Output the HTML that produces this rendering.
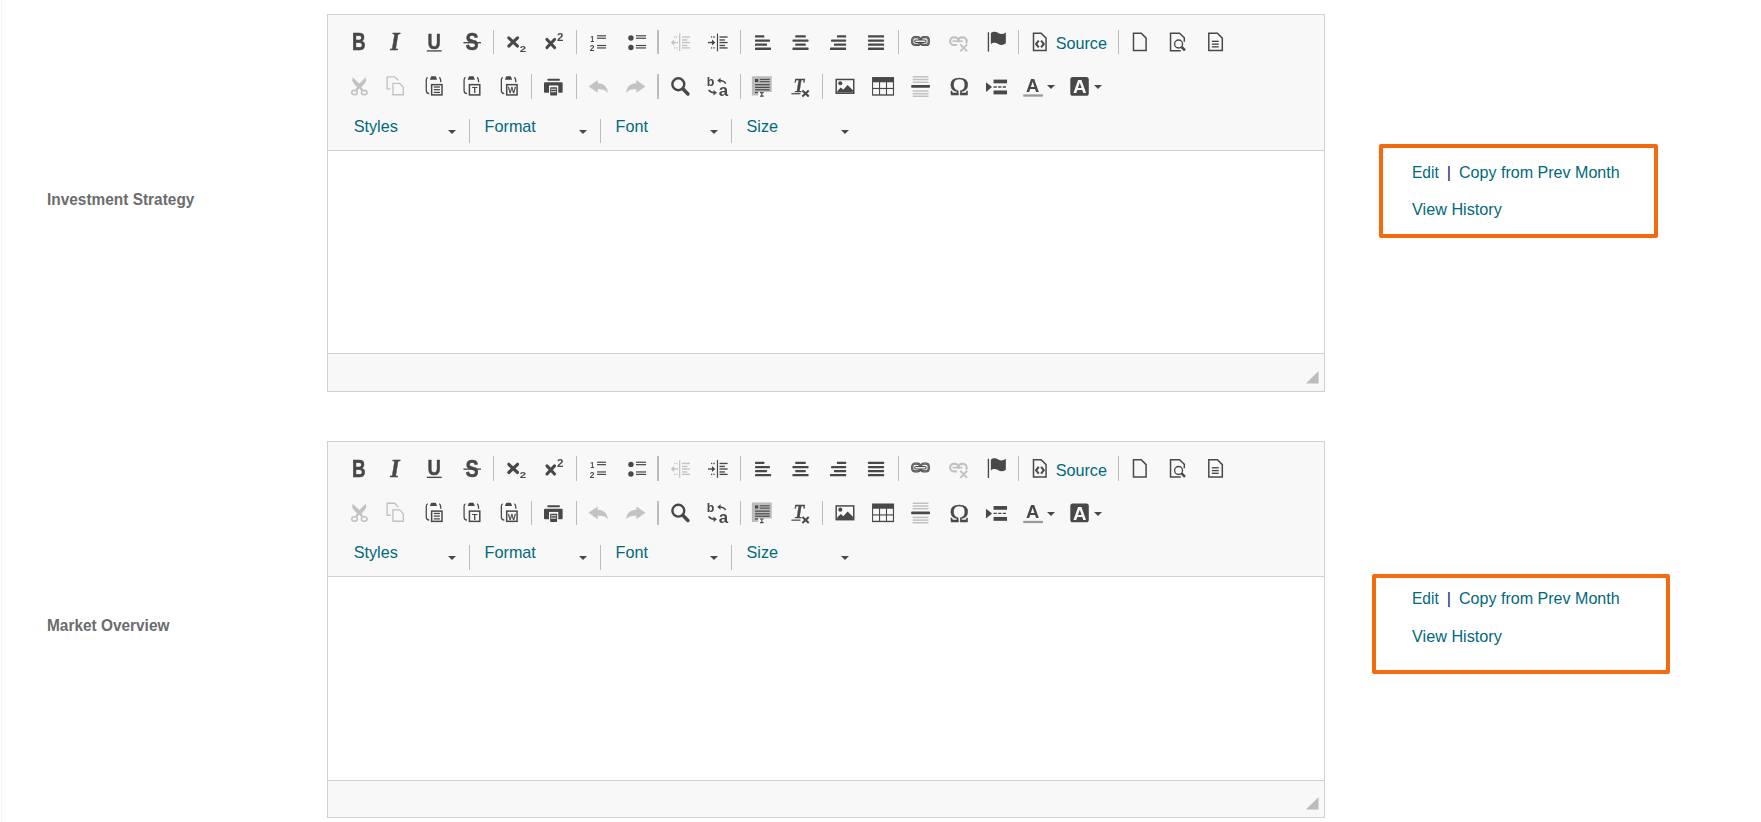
<!DOCTYPE html>
<html lang="en"><head><meta charset="utf-8"><title>Fund commentary editor</title>
<style>
html,body{margin:0;padding:0;background:#fff}
body{width:1761px;height:822px;position:relative;overflow:hidden;font-family:'Liberation Sans',sans-serif}
.abs{position:absolute;overflow:visible}
.ic{will-change:transform}
.vline{position:absolute;left:1px;top:0;width:1px;height:822px;background:#f5f5f5}
.ed{position:absolute;border:1px solid #d1d1d1;background:#fff}
.ed>div{position:absolute}
.tb{left:0;top:0;width:100%;background:#f8f8f8;border-bottom:1px solid #d1d1d1}
.ct{left:0;width:100%;background:#fff}
.bt{left:0;width:100%;background:#f8f8f8;border-top:1px solid #d1d1d1}
.sep{background:#bcbcbc}
.lbl,.cb{font-size:16.2px;line-height:24.3px;color:#00697a;white-space:nowrap}
.cb{line-height:20px}
.arr{width:0;height:0;border-left:4.05px solid transparent;border-right:4.05px solid transparent;border-top:4.05px solid #484848}
.tx{position:absolute;white-space:nowrap;transform-origin:0 0;line-height:20px}
.flab{font-weight:bold;font-size:15.8px;color:#6c6c6c}
.ob{position:absolute;border:4px solid #f46a0e;border-radius:2px}
.lk{font-size:16.4px;color:#00697a}
.bar{color:#14207a}
</style></head><body>
<div class="vline"></div>
<span class="tx flab" style="left:46.5px;top:190.3px;transform:scaleX(0.9760)">Investment Strategy</span>
<span class="tx flab" style="left:46.5px;top:616.3px;transform:scaleX(0.9750)">Market Overview</span>
<div class="ed" style="left:327px;top:14px;width:996px;height:376px">
<div class="tb" style="height:135px"></div>
<div class="ct" style="top:136px;height:202px"></div>
<div class="bt" style="top:338px;height:37px"></div>
<svg class="abs" style="left:978.1px;top:356.3px" width="12.6" height="12.4" viewBox="0 0 12.6 12.4"><path d="M12.6,0 V12.4 H0 Z" fill="#bcbcbc"/></svg>
<div class="sep" style="left:165px;top:15px;width:1px;height:24px"></div>
<div class="sep" style="left:248px;top:15px;width:1px;height:24px"></div>
<div class="sep" style="left:329px;top:15px;width:2px;height:24px"></div>
<div class="sep" style="left:412px;top:15px;width:1px;height:24px"></div>
<div class="sep" style="left:570px;top:15px;width:1px;height:24px"></div>
<div class="sep" style="left:690px;top:15px;width:1px;height:24px"></div>
<div class="sep" style="left:790px;top:15px;width:1px;height:24px"></div>
<div class="lbl" style="left:727.65px;top:15.75px">Source</div>
<div class="sep" style="left:203px;top:59px;width:1px;height:25px"></div>
<div class="sep" style="left:248px;top:59px;width:1px;height:25px"></div>
<div class="sep" style="left:329px;top:59px;width:2px;height:25px"></div>
<div class="sep" style="left:412px;top:59px;width:1px;height:25px"></div>
<div class="sep" style="left:494px;top:59px;width:1px;height:25px"></div>
<div class="arr" style="left:719.2px;top:70.2px"></div>
<div class="arr" style="left:766.45px;top:70.2px"></div>
<div class="cb" style="left:25.65px;top:100.6px">Styles</div>
<div class="arr" style="left:120.15px;top:115px"></div>
<div class="cb" style="left:156.6px;top:100.6px">Format</div>
<div class="arr" style="left:251.1px;top:115px"></div>
<div class="cb" style="left:287.55px;top:100.6px">Font</div>
<div class="arr" style="left:382.05px;top:115px"></div>
<div class="cb" style="left:418.5px;top:100.6px">Size</div>
<div class="arr" style="left:513px;top:115px"></div>
<div class="sep" style="left:141px;top:104px;width:1px;height:24px"></div>
<div class="sep" style="left:272px;top:104px;width:1px;height:24px"></div>
<div class="sep" style="left:403px;top:104px;width:1px;height:24px"></div>
<svg class="abs ic" style="left:0;top:0" width="996" height="120" viewBox="0 0 996 120"><g transform="translate(18.9 16.2) scale(1.35)"><text x="8.85" y="14.05" font-size="18.3" font-family="'Liberation Sans',sans-serif" font-weight="bold" font-style="normal" text-anchor="middle" fill="#484848" transform="translate(8.85 0) scale(0.765 1) translate(-8.85 0)" stroke="#484848" stroke-width="0.45" stroke-linejoin="round">B</text></g><g transform="translate(56.7 16.2) scale(1.35)"><text x="7.6" y="14.1" font-size="18.4" font-family="'Liberation Serif',serif" font-weight="bold" font-style="italic" text-anchor="middle" fill="#484848" transform="translate(7.6 0) scale(0.97 1) translate(-7.6 0)" stroke="#484848" stroke-width="0.3" stroke-linejoin="round">I</text></g><g transform="translate(94.5 16.2) scale(1.35)"><text x="8.6" y="12.85" font-size="16.3" font-family="'Liberation Sans',sans-serif" font-weight="bold" font-style="normal" text-anchor="middle" fill="#484848" transform="translate(8.6 0) scale(0.84 1) translate(-8.6 0)" stroke="#484848" stroke-width="0.35" stroke-linejoin="round">U</text><line x1="3.2" y1="14.6" x2="14.2" y2="14.6" stroke="#484848" stroke-width="1.0" stroke-linecap="butt"/></g><g transform="translate(132.3 16.2) scale(1.35)"><text x="8.7" y="14.0" font-size="18.3" font-family="'Liberation Sans',sans-serif" font-weight="bold" font-style="normal" text-anchor="middle" fill="#484848" transform="translate(8.7 0) scale(0.8 1) translate(-8.7 0)" stroke="#484848" stroke-width="0.4" stroke-linejoin="round">S</text><line x1="2.3" y1="8.5" x2="15.3" y2="8.5" stroke="#484848" stroke-width="1.0" stroke-linecap="butt"/></g><g transform="translate(176.85 16.2) scale(1.35)"><path d="M2.9,4.9 L9.4,11.0 M9.4,4.9 L2.9,11.0" stroke="#484848" stroke-width="2.3" stroke-linecap="round" fill="none"/><text x="13.45" y="15.1" font-size="7.4" font-family="'Liberation Sans',sans-serif" font-weight="bold" font-style="normal" text-anchor="middle" fill="#484848" transform="translate(13.45 0) scale(1.15 1) translate(-13.45 0)">2</text></g><g transform="translate(214.65 16.2) scale(1.35)"><path d="M3.2,6.1 L8.8,12.1 M8.8,6.1 L3.2,12.1" stroke="#484848" stroke-width="2.3" stroke-linecap="round" fill="none"/><text x="13.05" y="6.95" font-size="7.9" font-family="'Liberation Sans',sans-serif" font-weight="bold" font-style="normal" text-anchor="middle" fill="#484848" transform="translate(13.05 0) scale(1.08 1) translate(-13.05 0)">2</text></g><g transform="translate(259.2 16.2) scale(1.35)"><text x="3.8" y="7.7" font-size="6.6" font-family="'Liberation Sans',sans-serif" font-weight="bold" font-style="normal" text-anchor="middle" fill="#484848" transform="translate(3.8 0) scale(0.8 1) translate(-3.8 0)">1</text><text x="3.6" y="14.8" font-size="6.6" font-family="'Liberation Sans',sans-serif" font-weight="bold" font-style="normal" text-anchor="middle" fill="#484848" transform="translate(3.6 0) scale(0.95 1) translate(-3.6 0)">2</text><line x1="7.3" y1="3.4" x2="13.9" y2="3.4" stroke="#484848" stroke-width="0.9" stroke-linecap="butt"/><line x1="7.3" y1="5.2" x2="13.9" y2="5.2" stroke="#484848" stroke-width="0.9" stroke-linecap="butt"/><line x1="7.3" y1="10.6" x2="13.9" y2="10.6" stroke="#484848" stroke-width="0.9" stroke-linecap="butt"/><line x1="7.3" y1="12.4" x2="13.9" y2="12.4" stroke="#484848" stroke-width="0.9" stroke-linecap="butt"/></g><g transform="translate(297 16.2) scale(1.35)"><circle cx="4.4" cy="5.0" r="2.0" fill="#484848"/><circle cx="4.4" cy="12.1" r="2.0" fill="#484848"/><line x1="8.1" y1="3.4" x2="15.6" y2="3.4" stroke="#484848" stroke-width="0.9" stroke-linecap="butt"/><line x1="8.1" y1="5.2" x2="15.6" y2="5.2" stroke="#484848" stroke-width="0.9" stroke-linecap="butt"/><line x1="8.1" y1="10.6" x2="15.6" y2="10.6" stroke="#484848" stroke-width="0.9" stroke-linecap="butt"/><line x1="8.1" y1="12.4" x2="15.6" y2="12.4" stroke="#484848" stroke-width="0.9" stroke-linecap="butt"/></g><g transform="translate(341.55 16.2) scale(1.35)" style="opacity:.3"><line x1="7.5" y1="1.7" x2="7.5" y2="14.9" stroke="#484848" stroke-width="0.9"/><line x1="9.2" y1="4.3" x2="15.2" y2="4.3" stroke="#484848" stroke-width="1.0" stroke-linecap="butt"/><line x1="9.2" y1="6.5" x2="13.2" y2="6.5" stroke="#484848" stroke-width="1.0" stroke-linecap="butt"/><line x1="9.2" y1="8.4" x2="15.2" y2="8.4" stroke="#484848" stroke-width="1.0" stroke-linecap="butt"/><line x1="9.2" y1="10.6" x2="13.2" y2="10.6" stroke="#484848" stroke-width="1.0" stroke-linecap="butt"/><line x1="9.2" y1="12.4" x2="15.2" y2="12.4" stroke="#484848" stroke-width="1.0" stroke-linecap="butt"/><line x1="2.2" y1="8.4" x2="6.3" y2="8.4" stroke="#484848" stroke-width="1.0" stroke-linecap="butt"/><path d="M0.9,8.4 L3.4,6.2 V10.6 Z" fill="#484848"/><line x1="3.3" y1="4.3" x2="4.2" y2="4.3" stroke="#484848" stroke-width="1.0" stroke-linecap="butt"/><line x1="4.9" y1="4.3" x2="5.8" y2="4.3" stroke="#484848" stroke-width="1.0" stroke-linecap="butt"/><line x1="3.3" y1="12.4" x2="4.2" y2="12.4" stroke="#484848" stroke-width="1.0" stroke-linecap="butt"/><line x1="4.9" y1="12.4" x2="5.8" y2="12.4" stroke="#484848" stroke-width="1.0" stroke-linecap="butt"/></g><g transform="translate(379.35 16.2) scale(1.35)"><line x1="7.5" y1="1.7" x2="7.5" y2="14.9" stroke="#484848" stroke-width="0.9"/><line x1="9.0" y1="4.3" x2="15.0" y2="4.3" stroke="#484848" stroke-width="1.0" stroke-linecap="butt"/><line x1="9.0" y1="6.5" x2="13.0" y2="6.5" stroke="#484848" stroke-width="1.0" stroke-linecap="butt"/><line x1="9.0" y1="8.4" x2="15.0" y2="8.4" stroke="#484848" stroke-width="1.0" stroke-linecap="butt"/><line x1="9.0" y1="10.6" x2="13.0" y2="10.6" stroke="#484848" stroke-width="1.0" stroke-linecap="butt"/><line x1="9.0" y1="12.4" x2="15.0" y2="12.4" stroke="#484848" stroke-width="1.0" stroke-linecap="butt"/><line x1="0.5" y1="8.4" x2="4.4" y2="8.4" stroke="#484848" stroke-width="1.0" stroke-linecap="butt"/><path d="M5.9,8.4 L3.4,6.2 V10.6 Z" fill="#484848"/><line x1="2.7" y1="4.3" x2="3.6" y2="4.3" stroke="#484848" stroke-width="1.0" stroke-linecap="butt"/><line x1="4.4" y1="4.3" x2="5.4" y2="4.3" stroke="#484848" stroke-width="1.0" stroke-linecap="butt"/><line x1="2.7" y1="12.4" x2="3.6" y2="12.4" stroke="#484848" stroke-width="1.0" stroke-linecap="butt"/><line x1="4.4" y1="12.4" x2="5.4" y2="12.4" stroke="#484848" stroke-width="1.0" stroke-linecap="butt"/></g><g transform="translate(423.9 16.2) scale(1.35)"><rect x="2.3" y="3.05" width="6.8999999999999995" height="1.7" rx="0.35" fill="#484848"/><rect x="2.3" y="6.15" width="11.100000000000001" height="1.7" rx="0.35" fill="#484848"/><rect x="2.3" y="9.15" width="8.899999999999999" height="1.7" rx="0.35" fill="#484848"/><rect x="2.3" y="12.15" width="11.899999999999999" height="1.7" rx="0.35" fill="#484848"/></g><g transform="translate(461.7 16.2) scale(1.35)"><rect x="4.1" y="3.05" width="7.800000000000001" height="1.7" rx="0.35" fill="#484848"/><rect x="2.05" y="6.15" width="11.899999999999999" height="1.7" rx="0.35" fill="#484848"/><rect x="4.1" y="9.15" width="7.800000000000001" height="1.7" rx="0.35" fill="#484848"/><rect x="2.05" y="12.15" width="11.899999999999999" height="1.7" rx="0.35" fill="#484848"/></g><g transform="translate(499.5 16.2) scale(1.35)"><rect x="7.0" y="3.05" width="6.800000000000001" height="1.7" rx="0.35" fill="#484848"/><rect x="2.6" y="6.15" width="11.200000000000001" height="1.7" rx="0.35" fill="#484848"/><rect x="4.8" y="9.15" width="9.0" height="1.7" rx="0.35" fill="#484848"/><rect x="1.85" y="12.15" width="11.950000000000001" height="1.7" rx="0.35" fill="#484848"/></g><g transform="translate(537.3 16.2) scale(1.35)"><rect x="2.0" y="3.05" width="11.9" height="1.7" rx="0.35" fill="#484848"/><rect x="2.0" y="6.15" width="11.9" height="1.7" rx="0.35" fill="#484848"/><rect x="2.0" y="9.15" width="11.9" height="1.7" rx="0.35" fill="#484848"/><rect x="2.0" y="12.15" width="11.9" height="1.7" rx="0.35" fill="#484848"/></g><g transform="translate(581.85 16.2) scale(1.35)"><rect x="1.75" y="4.4" width="5.8" height="5.8" rx="2.1" fill="none" stroke="#484848" stroke-width="1.65"/><rect x="1.75" y="4.4" width="5.8" height="5.8" rx="2.1" fill="none" stroke="#8e8e8e" stroke-width="0.5"/><rect x="8.2" y="4.4" width="5.800000000000001" height="5.8" rx="2.1" fill="none" stroke="#484848" stroke-width="1.65"/><rect x="8.2" y="4.4" width="5.800000000000001" height="5.8" rx="2.1" fill="none" stroke="#8e8e8e" stroke-width="0.5"/><rect x="3.55" y="6.5" width="8.5" height="1.9" rx="0.95" fill="#ececec" stroke="#484848" stroke-width="0.75"/></g><g transform="translate(619.65 16.2) scale(1.35)" style="opacity:.3"><path d="M8.2,8.2 V7.3 A2.7,2.7 0 0 0 5.5,4.6 H4.5 A2.7,2.7 0 0 0 1.8,7.3 V7.5 A2.7,2.7 0 0 0 4.5,10.2 H7" fill="none" stroke="#484848" stroke-width="1.6"/><path d="M7.8,7.6 V7.3 A2.7,2.7 0 0 1 10.5,4.6 H11.4 A2.7,2.7 0 0 1 14.1,7.3 V7.6 A2.4,2.4 0 0 1 13.6,8.9" fill="none" stroke="#484848" stroke-width="1.6"/><path d="M3.6,7.4 H11" stroke="#484848" stroke-width="1.3" fill="none"/><path d="M9.3,9.7 L14.4,15 M14.4,9.7 L9.3,15" stroke="#484848" stroke-width="1.4" fill="none"/></g><g transform="translate(657.45 16.2) scale(1.35)"><line x1="2.2" y1="0.8" x2="2.2" y2="15.1" stroke="#484848" stroke-width="1.0"/><path d="M4,1.5 C5.6,0 7.6,0.1 9.5,1.3 C11.2,2.4 13.2,2.3 15.1,0.9 V9 C13.2,10.4 11.2,10.5 9.5,9.4 C7.6,8.2 5.6,8.1 4,9.6 Z" fill="#484848"/></g><g transform="translate(702 16.2) scale(1.35)"><path d="M2.6,1.55 H8.3 L11.9,5.15 V14.35 H2.6 Z" fill="none" stroke="#484848" stroke-width="1.1" stroke-linejoin="miter"/><path d="M6.5,6.9 L4.5,9.4 L6.5,11.9 M8.2,6.9 L10.2,9.4 L8.2,11.9" fill="none" stroke="#484848" stroke-width="1.5"/></g><g transform="translate(801.9 16.2) scale(1.35)"><path d="M2.65,1.55 H8.4 L12.0,5.15 V14.35 H2.65 Z" fill="none" stroke="#484848" stroke-width="1.1" stroke-linejoin="miter"/></g><g transform="translate(839.7 16.2) scale(1.35)"><path d="M12.3,7.8 V4.9 L8.8,1.5 H2.1 V14.4 H9.7" fill="none" stroke="#484848" stroke-width="1.1"/><circle cx="8.05" cy="9.5" r="2.95" fill="none" stroke="#484848" stroke-width="1.0"/><path d="M10.3,11.7 L12.8,14.2" stroke="#484848" stroke-width="1.9"/></g><g transform="translate(877.5 16.2) scale(1.35)"><path d="M2.45,1.55 H8.85 L12.45,5.15 V14.35 H2.45 Z" fill="none" stroke="#484848" stroke-width="1.1" stroke-linejoin="miter"/><line x1="4.7" y1="7.5" x2="9.8" y2="7.5" stroke="#484848" stroke-width="1.0" stroke-linecap="butt"/><line x1="4.7" y1="9.6" x2="9.8" y2="9.6" stroke="#484848" stroke-width="1.0" stroke-linecap="butt"/><line x1="4.7" y1="11.6" x2="9.8" y2="11.6" stroke="#484848" stroke-width="1.0" stroke-linecap="butt"/></g><g transform="translate(18.9 60.75) scale(1.35)" style="opacity:.3"><path d="M4.3,1.2 L3.9,3.7 L5.3,5.9 L8.1,9.1 L10.6,7.0 L7.5,4.3 Z" fill="#484848"/><path d="M14.0,1.2 L14.4,3.7 L13.0,5.9 L10.2,9.1 L7.7,7.0 L10.8,4.3 Z" fill="#484848"/><path d="M7.9,6.3 H10.4 V9.2 H7.9 Z" fill="#484848"/><path d="M8.6,8.6 L6.9,10.7 M9.7,8.6 L11.4,10.7" stroke="#484848" stroke-width="1.7" fill="none"/><ellipse cx="5.65" cy="12.45" rx="2.1" ry="1.6" fill="none" stroke="#484848" stroke-width="1.15"/><ellipse cx="12.85" cy="12.45" rx="2.1" ry="1.6" fill="none" stroke="#484848" stroke-width="1.15"/></g><g transform="translate(56.7 60.75) scale(1.35)" style="opacity:.3"><path d="M4.4,9.7 H1.8 V0.8 H7.4 L10.0,3.4" fill="none" stroke="#484848" stroke-width="1.0"/><path d="M6.1,5.7 H11.0 L13.8,8.5 V14.1 H6.1 Z" fill="none" stroke="#484848" stroke-width="1.0"/></g><g transform="translate(94.5 60.75) scale(1.35)"><path d="M3.85,1.15 C3.0,1.5 2.8,2.2 2.8,3.2 V11.0 C2.8,12.6 3.4000000000000004,13.2 5.0,13.2" fill="none" stroke="#484848" stroke-width="0.95"/><path d="M12.4,1.15 C13.299999999999999,1.6 13.549999999999999,2.4 13.549999999999999,4.8" fill="none" stroke="#484848" stroke-width="0.95"/><path d="M5.45,2.9 L6.35,0.6 Q6.5,0.35 6.800000000000001,0.35 H9.45 Q9.75,0.35 9.9,0.6 L10.799999999999999,2.9 Z" fill="#484848"/><rect x="6.77" y="6.6" width="7.68" height="7.6" fill="#f8f8f8" stroke="#484848" stroke-width="1.1"/><line x1="8.35" y1="8.35" x2="12.9" y2="8.35" stroke="#484848" stroke-width="0.95" stroke-linecap="butt"/><line x1="8.35" y1="10.3" x2="12.9" y2="10.3" stroke="#484848" stroke-width="0.95" stroke-linecap="butt"/><line x1="8.35" y1="12.35" x2="12.9" y2="12.35" stroke="#484848" stroke-width="0.95" stroke-linecap="butt"/></g><g transform="translate(132.3 60.75) scale(1.35)"><path d="M3.85,1.15 C3.0,1.5 2.8,2.2 2.8,3.2 V11.0 C2.8,12.6 3.4000000000000004,13.2 5.0,13.2" fill="none" stroke="#484848" stroke-width="0.95"/><path d="M12.4,1.15 C13.299999999999999,1.6 13.549999999999999,2.4 13.549999999999999,4.8" fill="none" stroke="#484848" stroke-width="0.95"/><path d="M5.45,2.9 L6.35,0.6 Q6.5,0.35 6.800000000000001,0.35 H9.45 Q9.75,0.35 9.9,0.6 L10.799999999999999,2.9 Z" fill="#484848"/><rect x="6.77" y="6.6" width="7.68" height="7.6" fill="#f8f8f8" stroke="#484848" stroke-width="1.1"/><text x="10.6" y="13.0" font-size="6.6" font-family="'Liberation Sans',sans-serif" font-weight="bold" font-style="normal" text-anchor="middle" fill="#484848" >T</text></g><g transform="translate(170.1 60.75) scale(1.35)"><path d="M3.45,1.15 C2.6,1.5 2.4,2.2 2.4,3.2 V11.0 C2.4,12.6 3.0,13.2 4.6,13.2" fill="none" stroke="#484848" stroke-width="0.95"/><path d="M12.0,1.15 C12.899999999999999,1.6 13.149999999999999,2.4 13.149999999999999,4.8" fill="none" stroke="#484848" stroke-width="0.95"/><path d="M5.05,2.9 L5.95,0.6 Q6.1000000000000005,0.35 6.4,0.35 H9.049999999999999 Q9.35,0.35 9.5,0.6 L10.399999999999999,2.9 Z" fill="#484848"/><rect x="6.37" y="6.6" width="7.68" height="7.6" fill="#f8f8f8" stroke="#484848" stroke-width="1.1"/><text x="10.2" y="13.0" font-size="6.6" font-family="'Liberation Sans',sans-serif" font-weight="normal" font-style="normal" text-anchor="middle" fill="#484848" transform="translate(10.2 0) scale(0.92 1) translate(-10.2 0)" stroke="#484848" stroke-width="0.3" stroke-linejoin="round">W</text></g><g transform="translate(214.65 60.75) scale(1.35)"><rect x="3.4" y="2.2" width="9.4" height="1.5" rx="0.7" fill="#484848"/><rect x="1.0" y="4.8" width="13.8" height="7.8" rx="0.8" fill="#484848"/><rect x="4.7" y="7.2" width="6.9" height="7.6" fill="#f8f8f8"/><rect x="5.6" y="8.5" width="5.1" height="6.1" rx="0.5" fill="#484848"/><line x1="6.2" y1="10.0" x2="10.1" y2="10.0" stroke="#e0e0e0" stroke-width="0.8" stroke-linecap="butt"/><line x1="6.2" y1="11.8" x2="10.1" y2="11.8" stroke="#e0e0e0" stroke-width="0.8" stroke-linecap="butt"/></g><g transform="translate(259.2 60.75) scale(1.35)" style="opacity:.3"><path d="M1.0,7.9 L7.8,3.1 V5.6 C12.3,5.6 15.0,8.4 15.3,12.7 C13.6,10.6 11.4,9.9 7.8,10.1 V12.6 Z" fill="#484848"/></g><g transform="translate(297 60.75) scale(1.35)" style="opacity:.3"><path d="M15.2,7.9 L8.4,3.1 V5.6 C3.9,5.6 1.2,8.4 0.9,12.7 C2.6,10.6 4.8,9.9 8.4,10.1 V12.6 Z" fill="#484848"/></g><g transform="translate(341.55 60.75) scale(1.35)"><circle cx="6.5" cy="6.3" r="4.4" fill="none" stroke="#484848" stroke-width="1.8"/><path d="M10.0,9.9 L13.6,13.5" stroke="#484848" stroke-width="2.6" stroke-linecap="round"/></g><g transform="translate(379.35 60.75) scale(1.35)"><text x="2.3" y="7.55" font-size="9.2" font-family="'Liberation Sans',sans-serif" font-weight="bold" font-style="normal" text-anchor="middle" fill="#484848" >b</text><text x="11.9" y="15.2" font-size="12.5" font-family="'Liberation Sans',sans-serif" font-weight="bold" font-style="normal" text-anchor="middle" fill="#484848" >a</text><path d="M13.6,5.8 C12.6,4.0 11.0,3.4 8.8,3.5" fill="none" stroke="#484848" stroke-width="1.1"/><path d="M7.3,3.5 L9.8,1.5 V5.5 Z" fill="#484848"/><path d="M1.0,10.5 C1.9,12.0 3.4,12.6 5.4,12.6" fill="none" stroke="#484848" stroke-width="1.1"/><path d="M7.1,12.6 L4.6,10.6 V14.6 Z" fill="#484848"/></g><g transform="translate(423.9 60.75) scale(1.35)"><path d="M0,0.3 H14.7 V12.0 H4.7 V14.6 H0 Z" fill="#bcbcbc"/><rect x="2.3" y="2.4" width="2.4" height="2.3" fill="#484848"/><line x1="5.8" y1="2.7" x2="13.2" y2="2.7" stroke="#484848" stroke-width="0.8" stroke-linecap="butt"/><line x1="5.8" y1="4.4" x2="13.2" y2="4.4" stroke="#484848" stroke-width="0.8" stroke-linecap="butt"/><line x1="2.3" y1="6.6" x2="13.2" y2="6.6" stroke="#484848" stroke-width="0.9" stroke-linecap="butt"/><line x1="2.3" y1="8.6" x2="13.2" y2="8.6" stroke="#484848" stroke-width="0.9" stroke-linecap="butt"/><line x1="2.3" y1="10.4" x2="13.2" y2="10.4" stroke="#484848" stroke-width="0.9" stroke-linecap="butt"/><line x1="2.3" y1="12.4" x2="4.5" y2="12.4" stroke="#484848" stroke-width="0.9" stroke-linecap="butt"/><path d="M6.0,12.5 H8.7 M6.0,15.1 H8.7 M7.35,12.5 V15.1" stroke="#484848" stroke-width="0.8" fill="none"/></g><g transform="translate(461.7 60.75) scale(1.35)"><text x="6.9" y="12.0" font-size="14.4" font-family="'Liberation Serif',serif" font-weight="bold" font-style="italic" text-anchor="middle" fill="#484848" transform="translate(6.9 0) scale(0.92 1) translate(-6.9 0)" stroke="#484848" stroke-width="0.25" stroke-linejoin="round">T</text><line x1="1.25" y1="13.3" x2="8.0" y2="13.3" stroke="#484848" stroke-width="0.9" stroke-linecap="butt"/><path d="M9.4,11.0 L14.1,15.4 M14.1,11.0 L9.4,15.4" stroke="#484848" stroke-width="1.5" fill="none"/></g><g transform="translate(506.25 60.75) scale(1.35)"><rect x="1.45" y="2.75" width="13.0" height="10.2" fill="none" stroke="#484848" stroke-width="1.1"/><circle cx="4.5" cy="5.5" r="1.5" fill="#484848"/><path d="M2.2,12.4 V11.4 L4.9,8.7 L6.7,10.4 L9.9,6.8 L13.8,10.8 V12.4 Z" fill="#484848"/></g><g transform="translate(544.05 60.75) scale(1.35)"><rect x="0" y="0.96" width="16.3" height="13.8" fill="#484848"/><rect x="0.8" y="4.85" width="4.35" height="4.15" fill="#f8f8f8"/><rect x="0.8" y="9.85" width="4.35" height="3.9" fill="#f8f8f8"/><rect x="5.95" y="4.85" width="4.35" height="4.15" fill="#f8f8f8"/><rect x="5.95" y="9.85" width="4.35" height="3.9" fill="#f8f8f8"/><rect x="11.1" y="4.85" width="4.35" height="4.15" fill="#f8f8f8"/><rect x="11.1" y="9.85" width="4.35" height="3.9" fill="#f8f8f8"/></g><g transform="translate(581.85 60.75) scale(1.35)"><line x1="2.1" y1="0.8" x2="13.8" y2="0.8" stroke="#c0c0c0" stroke-width="1.1" stroke-linecap="butt"/><line x1="2.1" y1="2.8" x2="13.8" y2="2.8" stroke="#c0c0c0" stroke-width="1.1" stroke-linecap="butt"/><line x1="2.1" y1="4.8" x2="13.8" y2="4.8" stroke="#c0c0c0" stroke-width="1.1" stroke-linecap="butt"/><rect x="1.0" y="6.9" width="13.9" height="2.0" rx="0.5" fill="#484848"/><line x1="2.1" y1="11.3" x2="13.8" y2="11.3" stroke="#c0c0c0" stroke-width="1.1" stroke-linecap="butt"/><line x1="2.1" y1="13.3" x2="13.8" y2="13.3" stroke="#c0c0c0" stroke-width="1.1" stroke-linecap="butt"/><line x1="2.1" y1="15.2" x2="13.8" y2="15.2" stroke="#c0c0c0" stroke-width="1.1" stroke-linecap="butt"/></g><g transform="translate(619.65 60.75) scale(1.35)"><text x="8.6" y="14.6" font-size="18.7" font-family="'Liberation Serif',serif" font-weight="normal" font-style="normal" text-anchor="middle" fill="#484848" transform="translate(8.6 0) scale(1.04 1) translate(-8.6 0)" stroke="#484848" stroke-width="0.35" stroke-linejoin="round">Ω</text></g><g transform="translate(657.45 60.75) scale(1.35)"><path d="M0.4,4.9 L4.9,8.4 L0.4,12 Z" fill="#484848"/><rect x="6.0" y="2.85" width="10" height="2.75" fill="#484848"/><rect x="6.0" y="10.9" width="10" height="2.9" fill="#484848"/><path d="M6.0,8.3 H16" stroke="#484848" stroke-width="1.0" stroke-dasharray="2.4 1.0" fill="none"/></g><g transform="translate(695.25 60.75) scale(1.35)"><text x="7.0" y="12.0" font-size="13.6" font-family="'Liberation Sans',sans-serif" font-weight="bold" font-style="normal" text-anchor="middle" fill="#484848" >A</text><rect x="0" y="13.8" width="14.6" height="1.7" fill="#9a9a9a"/></g><g transform="translate(742.5 60.75) scale(1.35)"><rect x="-0.15" y="0.9" width="13.7" height="13.95" rx="1.9" fill="#484848"/><text x="6.85" y="12.85" font-size="13.9" font-family="'Liberation Sans',sans-serif" font-weight="bold" font-style="normal" text-anchor="middle" fill="#f8f8f8" >A</text></g></svg>
</div>
<div class="ed" style="left:327px;top:441px;width:996px;height:375px">
<div class="tb" style="height:134px"></div>
<div class="ct" style="top:135px;height:203px"></div>
<div class="bt" style="top:338px;height:36px"></div>
<svg class="abs" style="left:978.1px;top:355.3px" width="12.6" height="12.4" viewBox="0 0 12.6 12.4"><path d="M12.6,0 V12.4 H0 Z" fill="#bcbcbc"/></svg>
<div class="sep" style="left:165px;top:14px;width:1px;height:25px"></div>
<div class="sep" style="left:248px;top:14px;width:1px;height:25px"></div>
<div class="sep" style="left:329px;top:14px;width:2px;height:25px"></div>
<div class="sep" style="left:412px;top:14px;width:1px;height:25px"></div>
<div class="sep" style="left:570px;top:14px;width:1px;height:25px"></div>
<div class="sep" style="left:690px;top:14px;width:1px;height:25px"></div>
<div class="sep" style="left:790px;top:14px;width:1px;height:25px"></div>
<div class="lbl" style="left:727.65px;top:15.75px">Source</div>
<div class="sep" style="left:203px;top:59px;width:1px;height:24px"></div>
<div class="sep" style="left:248px;top:59px;width:1px;height:24px"></div>
<div class="sep" style="left:329px;top:59px;width:2px;height:24px"></div>
<div class="sep" style="left:412px;top:59px;width:1px;height:24px"></div>
<div class="sep" style="left:494px;top:59px;width:1px;height:24px"></div>
<div class="arr" style="left:719.2px;top:69.65px"></div>
<div class="arr" style="left:766.45px;top:69.65px"></div>
<div class="cb" style="left:25.65px;top:99.6px">Styles</div>
<div class="arr" style="left:120.15px;top:114px"></div>
<div class="cb" style="left:156.6px;top:99.6px">Format</div>
<div class="arr" style="left:251.1px;top:114px"></div>
<div class="cb" style="left:287.55px;top:99.6px">Font</div>
<div class="arr" style="left:382.05px;top:114px"></div>
<div class="cb" style="left:418.5px;top:99.6px">Size</div>
<div class="arr" style="left:513px;top:114px"></div>
<div class="sep" style="left:141px;top:103px;width:1px;height:25px"></div>
<div class="sep" style="left:272px;top:103px;width:1px;height:25px"></div>
<div class="sep" style="left:403px;top:103px;width:1px;height:25px"></div>
<svg class="abs ic" style="left:0;top:0" width="996" height="120" viewBox="0 0 996 120"><g transform="translate(18.9 15.65) scale(1.35)"><text x="8.85" y="14.05" font-size="18.3" font-family="'Liberation Sans',sans-serif" font-weight="bold" font-style="normal" text-anchor="middle" fill="#484848" transform="translate(8.85 0) scale(0.765 1) translate(-8.85 0)" stroke="#484848" stroke-width="0.45" stroke-linejoin="round">B</text></g><g transform="translate(56.7 15.65) scale(1.35)"><text x="7.6" y="14.1" font-size="18.4" font-family="'Liberation Serif',serif" font-weight="bold" font-style="italic" text-anchor="middle" fill="#484848" transform="translate(7.6 0) scale(0.97 1) translate(-7.6 0)" stroke="#484848" stroke-width="0.3" stroke-linejoin="round">I</text></g><g transform="translate(94.5 15.65) scale(1.35)"><text x="8.6" y="12.85" font-size="16.3" font-family="'Liberation Sans',sans-serif" font-weight="bold" font-style="normal" text-anchor="middle" fill="#484848" transform="translate(8.6 0) scale(0.84 1) translate(-8.6 0)" stroke="#484848" stroke-width="0.35" stroke-linejoin="round">U</text><line x1="3.2" y1="14.6" x2="14.2" y2="14.6" stroke="#484848" stroke-width="1.0" stroke-linecap="butt"/></g><g transform="translate(132.3 15.65) scale(1.35)"><text x="8.7" y="14.0" font-size="18.3" font-family="'Liberation Sans',sans-serif" font-weight="bold" font-style="normal" text-anchor="middle" fill="#484848" transform="translate(8.7 0) scale(0.8 1) translate(-8.7 0)" stroke="#484848" stroke-width="0.4" stroke-linejoin="round">S</text><line x1="2.3" y1="8.5" x2="15.3" y2="8.5" stroke="#484848" stroke-width="1.0" stroke-linecap="butt"/></g><g transform="translate(176.85 15.65) scale(1.35)"><path d="M2.9,4.9 L9.4,11.0 M9.4,4.9 L2.9,11.0" stroke="#484848" stroke-width="2.3" stroke-linecap="round" fill="none"/><text x="13.45" y="15.1" font-size="7.4" font-family="'Liberation Sans',sans-serif" font-weight="bold" font-style="normal" text-anchor="middle" fill="#484848" transform="translate(13.45 0) scale(1.15 1) translate(-13.45 0)">2</text></g><g transform="translate(214.65 15.65) scale(1.35)"><path d="M3.2,6.1 L8.8,12.1 M8.8,6.1 L3.2,12.1" stroke="#484848" stroke-width="2.3" stroke-linecap="round" fill="none"/><text x="13.05" y="6.95" font-size="7.9" font-family="'Liberation Sans',sans-serif" font-weight="bold" font-style="normal" text-anchor="middle" fill="#484848" transform="translate(13.05 0) scale(1.08 1) translate(-13.05 0)">2</text></g><g transform="translate(259.2 15.65) scale(1.35)"><text x="3.8" y="7.7" font-size="6.6" font-family="'Liberation Sans',sans-serif" font-weight="bold" font-style="normal" text-anchor="middle" fill="#484848" transform="translate(3.8 0) scale(0.8 1) translate(-3.8 0)">1</text><text x="3.6" y="14.8" font-size="6.6" font-family="'Liberation Sans',sans-serif" font-weight="bold" font-style="normal" text-anchor="middle" fill="#484848" transform="translate(3.6 0) scale(0.95 1) translate(-3.6 0)">2</text><line x1="7.3" y1="3.4" x2="13.9" y2="3.4" stroke="#484848" stroke-width="0.9" stroke-linecap="butt"/><line x1="7.3" y1="5.2" x2="13.9" y2="5.2" stroke="#484848" stroke-width="0.9" stroke-linecap="butt"/><line x1="7.3" y1="10.6" x2="13.9" y2="10.6" stroke="#484848" stroke-width="0.9" stroke-linecap="butt"/><line x1="7.3" y1="12.4" x2="13.9" y2="12.4" stroke="#484848" stroke-width="0.9" stroke-linecap="butt"/></g><g transform="translate(297 15.65) scale(1.35)"><circle cx="4.4" cy="5.0" r="2.0" fill="#484848"/><circle cx="4.4" cy="12.1" r="2.0" fill="#484848"/><line x1="8.1" y1="3.4" x2="15.6" y2="3.4" stroke="#484848" stroke-width="0.9" stroke-linecap="butt"/><line x1="8.1" y1="5.2" x2="15.6" y2="5.2" stroke="#484848" stroke-width="0.9" stroke-linecap="butt"/><line x1="8.1" y1="10.6" x2="15.6" y2="10.6" stroke="#484848" stroke-width="0.9" stroke-linecap="butt"/><line x1="8.1" y1="12.4" x2="15.6" y2="12.4" stroke="#484848" stroke-width="0.9" stroke-linecap="butt"/></g><g transform="translate(341.55 15.65) scale(1.35)" style="opacity:.3"><line x1="7.5" y1="1.7" x2="7.5" y2="14.9" stroke="#484848" stroke-width="0.9"/><line x1="9.2" y1="4.3" x2="15.2" y2="4.3" stroke="#484848" stroke-width="1.0" stroke-linecap="butt"/><line x1="9.2" y1="6.5" x2="13.2" y2="6.5" stroke="#484848" stroke-width="1.0" stroke-linecap="butt"/><line x1="9.2" y1="8.4" x2="15.2" y2="8.4" stroke="#484848" stroke-width="1.0" stroke-linecap="butt"/><line x1="9.2" y1="10.6" x2="13.2" y2="10.6" stroke="#484848" stroke-width="1.0" stroke-linecap="butt"/><line x1="9.2" y1="12.4" x2="15.2" y2="12.4" stroke="#484848" stroke-width="1.0" stroke-linecap="butt"/><line x1="2.2" y1="8.4" x2="6.3" y2="8.4" stroke="#484848" stroke-width="1.0" stroke-linecap="butt"/><path d="M0.9,8.4 L3.4,6.2 V10.6 Z" fill="#484848"/><line x1="3.3" y1="4.3" x2="4.2" y2="4.3" stroke="#484848" stroke-width="1.0" stroke-linecap="butt"/><line x1="4.9" y1="4.3" x2="5.8" y2="4.3" stroke="#484848" stroke-width="1.0" stroke-linecap="butt"/><line x1="3.3" y1="12.4" x2="4.2" y2="12.4" stroke="#484848" stroke-width="1.0" stroke-linecap="butt"/><line x1="4.9" y1="12.4" x2="5.8" y2="12.4" stroke="#484848" stroke-width="1.0" stroke-linecap="butt"/></g><g transform="translate(379.35 15.65) scale(1.35)"><line x1="7.5" y1="1.7" x2="7.5" y2="14.9" stroke="#484848" stroke-width="0.9"/><line x1="9.0" y1="4.3" x2="15.0" y2="4.3" stroke="#484848" stroke-width="1.0" stroke-linecap="butt"/><line x1="9.0" y1="6.5" x2="13.0" y2="6.5" stroke="#484848" stroke-width="1.0" stroke-linecap="butt"/><line x1="9.0" y1="8.4" x2="15.0" y2="8.4" stroke="#484848" stroke-width="1.0" stroke-linecap="butt"/><line x1="9.0" y1="10.6" x2="13.0" y2="10.6" stroke="#484848" stroke-width="1.0" stroke-linecap="butt"/><line x1="9.0" y1="12.4" x2="15.0" y2="12.4" stroke="#484848" stroke-width="1.0" stroke-linecap="butt"/><line x1="0.5" y1="8.4" x2="4.4" y2="8.4" stroke="#484848" stroke-width="1.0" stroke-linecap="butt"/><path d="M5.9,8.4 L3.4,6.2 V10.6 Z" fill="#484848"/><line x1="2.7" y1="4.3" x2="3.6" y2="4.3" stroke="#484848" stroke-width="1.0" stroke-linecap="butt"/><line x1="4.4" y1="4.3" x2="5.4" y2="4.3" stroke="#484848" stroke-width="1.0" stroke-linecap="butt"/><line x1="2.7" y1="12.4" x2="3.6" y2="12.4" stroke="#484848" stroke-width="1.0" stroke-linecap="butt"/><line x1="4.4" y1="12.4" x2="5.4" y2="12.4" stroke="#484848" stroke-width="1.0" stroke-linecap="butt"/></g><g transform="translate(423.9 15.65) scale(1.35)"><rect x="2.3" y="3.05" width="6.8999999999999995" height="1.7" rx="0.35" fill="#484848"/><rect x="2.3" y="6.15" width="11.100000000000001" height="1.7" rx="0.35" fill="#484848"/><rect x="2.3" y="9.15" width="8.899999999999999" height="1.7" rx="0.35" fill="#484848"/><rect x="2.3" y="12.15" width="11.899999999999999" height="1.7" rx="0.35" fill="#484848"/></g><g transform="translate(461.7 15.65) scale(1.35)"><rect x="4.1" y="3.05" width="7.800000000000001" height="1.7" rx="0.35" fill="#484848"/><rect x="2.05" y="6.15" width="11.899999999999999" height="1.7" rx="0.35" fill="#484848"/><rect x="4.1" y="9.15" width="7.800000000000001" height="1.7" rx="0.35" fill="#484848"/><rect x="2.05" y="12.15" width="11.899999999999999" height="1.7" rx="0.35" fill="#484848"/></g><g transform="translate(499.5 15.65) scale(1.35)"><rect x="7.0" y="3.05" width="6.800000000000001" height="1.7" rx="0.35" fill="#484848"/><rect x="2.6" y="6.15" width="11.200000000000001" height="1.7" rx="0.35" fill="#484848"/><rect x="4.8" y="9.15" width="9.0" height="1.7" rx="0.35" fill="#484848"/><rect x="1.85" y="12.15" width="11.950000000000001" height="1.7" rx="0.35" fill="#484848"/></g><g transform="translate(537.3 15.65) scale(1.35)"><rect x="2.0" y="3.05" width="11.9" height="1.7" rx="0.35" fill="#484848"/><rect x="2.0" y="6.15" width="11.9" height="1.7" rx="0.35" fill="#484848"/><rect x="2.0" y="9.15" width="11.9" height="1.7" rx="0.35" fill="#484848"/><rect x="2.0" y="12.15" width="11.9" height="1.7" rx="0.35" fill="#484848"/></g><g transform="translate(581.85 15.65) scale(1.35)"><rect x="1.75" y="4.4" width="5.8" height="5.8" rx="2.1" fill="none" stroke="#484848" stroke-width="1.65"/><rect x="1.75" y="4.4" width="5.8" height="5.8" rx="2.1" fill="none" stroke="#8e8e8e" stroke-width="0.5"/><rect x="8.2" y="4.4" width="5.800000000000001" height="5.8" rx="2.1" fill="none" stroke="#484848" stroke-width="1.65"/><rect x="8.2" y="4.4" width="5.800000000000001" height="5.8" rx="2.1" fill="none" stroke="#8e8e8e" stroke-width="0.5"/><rect x="3.55" y="6.5" width="8.5" height="1.9" rx="0.95" fill="#ececec" stroke="#484848" stroke-width="0.75"/></g><g transform="translate(619.65 15.65) scale(1.35)" style="opacity:.3"><path d="M8.2,8.2 V7.3 A2.7,2.7 0 0 0 5.5,4.6 H4.5 A2.7,2.7 0 0 0 1.8,7.3 V7.5 A2.7,2.7 0 0 0 4.5,10.2 H7" fill="none" stroke="#484848" stroke-width="1.6"/><path d="M7.8,7.6 V7.3 A2.7,2.7 0 0 1 10.5,4.6 H11.4 A2.7,2.7 0 0 1 14.1,7.3 V7.6 A2.4,2.4 0 0 1 13.6,8.9" fill="none" stroke="#484848" stroke-width="1.6"/><path d="M3.6,7.4 H11" stroke="#484848" stroke-width="1.3" fill="none"/><path d="M9.3,9.7 L14.4,15 M14.4,9.7 L9.3,15" stroke="#484848" stroke-width="1.4" fill="none"/></g><g transform="translate(657.45 15.65) scale(1.35)"><line x1="2.2" y1="0.8" x2="2.2" y2="15.1" stroke="#484848" stroke-width="1.0"/><path d="M4,1.5 C5.6,0 7.6,0.1 9.5,1.3 C11.2,2.4 13.2,2.3 15.1,0.9 V9 C13.2,10.4 11.2,10.5 9.5,9.4 C7.6,8.2 5.6,8.1 4,9.6 Z" fill="#484848"/></g><g transform="translate(702 15.65) scale(1.35)"><path d="M2.6,1.55 H8.3 L11.9,5.15 V14.35 H2.6 Z" fill="none" stroke="#484848" stroke-width="1.1" stroke-linejoin="miter"/><path d="M6.5,6.9 L4.5,9.4 L6.5,11.9 M8.2,6.9 L10.2,9.4 L8.2,11.9" fill="none" stroke="#484848" stroke-width="1.5"/></g><g transform="translate(801.9 15.65) scale(1.35)"><path d="M2.65,1.55 H8.4 L12.0,5.15 V14.35 H2.65 Z" fill="none" stroke="#484848" stroke-width="1.1" stroke-linejoin="miter"/></g><g transform="translate(839.7 15.65) scale(1.35)"><path d="M12.3,7.8 V4.9 L8.8,1.5 H2.1 V14.4 H9.7" fill="none" stroke="#484848" stroke-width="1.1"/><circle cx="8.05" cy="9.5" r="2.95" fill="none" stroke="#484848" stroke-width="1.0"/><path d="M10.3,11.7 L12.8,14.2" stroke="#484848" stroke-width="1.9"/></g><g transform="translate(877.5 15.65) scale(1.35)"><path d="M2.45,1.55 H8.85 L12.45,5.15 V14.35 H2.45 Z" fill="none" stroke="#484848" stroke-width="1.1" stroke-linejoin="miter"/><line x1="4.7" y1="7.5" x2="9.8" y2="7.5" stroke="#484848" stroke-width="1.0" stroke-linecap="butt"/><line x1="4.7" y1="9.6" x2="9.8" y2="9.6" stroke="#484848" stroke-width="1.0" stroke-linecap="butt"/><line x1="4.7" y1="11.6" x2="9.8" y2="11.6" stroke="#484848" stroke-width="1.0" stroke-linecap="butt"/></g><g transform="translate(18.9 60.2) scale(1.35)" style="opacity:.3"><path d="M4.3,1.2 L3.9,3.7 L5.3,5.9 L8.1,9.1 L10.6,7.0 L7.5,4.3 Z" fill="#484848"/><path d="M14.0,1.2 L14.4,3.7 L13.0,5.9 L10.2,9.1 L7.7,7.0 L10.8,4.3 Z" fill="#484848"/><path d="M7.9,6.3 H10.4 V9.2 H7.9 Z" fill="#484848"/><path d="M8.6,8.6 L6.9,10.7 M9.7,8.6 L11.4,10.7" stroke="#484848" stroke-width="1.7" fill="none"/><ellipse cx="5.65" cy="12.45" rx="2.1" ry="1.6" fill="none" stroke="#484848" stroke-width="1.15"/><ellipse cx="12.85" cy="12.45" rx="2.1" ry="1.6" fill="none" stroke="#484848" stroke-width="1.15"/></g><g transform="translate(56.7 60.2) scale(1.35)" style="opacity:.3"><path d="M4.4,9.7 H1.8 V0.8 H7.4 L10.0,3.4" fill="none" stroke="#484848" stroke-width="1.0"/><path d="M6.1,5.7 H11.0 L13.8,8.5 V14.1 H6.1 Z" fill="none" stroke="#484848" stroke-width="1.0"/></g><g transform="translate(94.5 60.2) scale(1.35)"><path d="M3.85,1.15 C3.0,1.5 2.8,2.2 2.8,3.2 V11.0 C2.8,12.6 3.4000000000000004,13.2 5.0,13.2" fill="none" stroke="#484848" stroke-width="0.95"/><path d="M12.4,1.15 C13.299999999999999,1.6 13.549999999999999,2.4 13.549999999999999,4.8" fill="none" stroke="#484848" stroke-width="0.95"/><path d="M5.45,2.9 L6.35,0.6 Q6.5,0.35 6.800000000000001,0.35 H9.45 Q9.75,0.35 9.9,0.6 L10.799999999999999,2.9 Z" fill="#484848"/><rect x="6.77" y="6.6" width="7.68" height="7.6" fill="#f8f8f8" stroke="#484848" stroke-width="1.1"/><line x1="8.35" y1="8.35" x2="12.9" y2="8.35" stroke="#484848" stroke-width="0.95" stroke-linecap="butt"/><line x1="8.35" y1="10.3" x2="12.9" y2="10.3" stroke="#484848" stroke-width="0.95" stroke-linecap="butt"/><line x1="8.35" y1="12.35" x2="12.9" y2="12.35" stroke="#484848" stroke-width="0.95" stroke-linecap="butt"/></g><g transform="translate(132.3 60.2) scale(1.35)"><path d="M3.85,1.15 C3.0,1.5 2.8,2.2 2.8,3.2 V11.0 C2.8,12.6 3.4000000000000004,13.2 5.0,13.2" fill="none" stroke="#484848" stroke-width="0.95"/><path d="M12.4,1.15 C13.299999999999999,1.6 13.549999999999999,2.4 13.549999999999999,4.8" fill="none" stroke="#484848" stroke-width="0.95"/><path d="M5.45,2.9 L6.35,0.6 Q6.5,0.35 6.800000000000001,0.35 H9.45 Q9.75,0.35 9.9,0.6 L10.799999999999999,2.9 Z" fill="#484848"/><rect x="6.77" y="6.6" width="7.68" height="7.6" fill="#f8f8f8" stroke="#484848" stroke-width="1.1"/><text x="10.6" y="13.0" font-size="6.6" font-family="'Liberation Sans',sans-serif" font-weight="bold" font-style="normal" text-anchor="middle" fill="#484848" >T</text></g><g transform="translate(170.1 60.2) scale(1.35)"><path d="M3.45,1.15 C2.6,1.5 2.4,2.2 2.4,3.2 V11.0 C2.4,12.6 3.0,13.2 4.6,13.2" fill="none" stroke="#484848" stroke-width="0.95"/><path d="M12.0,1.15 C12.899999999999999,1.6 13.149999999999999,2.4 13.149999999999999,4.8" fill="none" stroke="#484848" stroke-width="0.95"/><path d="M5.05,2.9 L5.95,0.6 Q6.1000000000000005,0.35 6.4,0.35 H9.049999999999999 Q9.35,0.35 9.5,0.6 L10.399999999999999,2.9 Z" fill="#484848"/><rect x="6.37" y="6.6" width="7.68" height="7.6" fill="#f8f8f8" stroke="#484848" stroke-width="1.1"/><text x="10.2" y="13.0" font-size="6.6" font-family="'Liberation Sans',sans-serif" font-weight="normal" font-style="normal" text-anchor="middle" fill="#484848" transform="translate(10.2 0) scale(0.92 1) translate(-10.2 0)" stroke="#484848" stroke-width="0.3" stroke-linejoin="round">W</text></g><g transform="translate(214.65 60.2) scale(1.35)"><rect x="3.4" y="2.2" width="9.4" height="1.5" rx="0.7" fill="#484848"/><rect x="1.0" y="4.8" width="13.8" height="7.8" rx="0.8" fill="#484848"/><rect x="4.7" y="7.2" width="6.9" height="7.6" fill="#f8f8f8"/><rect x="5.6" y="8.5" width="5.1" height="6.1" rx="0.5" fill="#484848"/><line x1="6.2" y1="10.0" x2="10.1" y2="10.0" stroke="#e0e0e0" stroke-width="0.8" stroke-linecap="butt"/><line x1="6.2" y1="11.8" x2="10.1" y2="11.8" stroke="#e0e0e0" stroke-width="0.8" stroke-linecap="butt"/></g><g transform="translate(259.2 60.2) scale(1.35)" style="opacity:.3"><path d="M1.0,7.9 L7.8,3.1 V5.6 C12.3,5.6 15.0,8.4 15.3,12.7 C13.6,10.6 11.4,9.9 7.8,10.1 V12.6 Z" fill="#484848"/></g><g transform="translate(297 60.2) scale(1.35)" style="opacity:.3"><path d="M15.2,7.9 L8.4,3.1 V5.6 C3.9,5.6 1.2,8.4 0.9,12.7 C2.6,10.6 4.8,9.9 8.4,10.1 V12.6 Z" fill="#484848"/></g><g transform="translate(341.55 60.2) scale(1.35)"><circle cx="6.5" cy="6.3" r="4.4" fill="none" stroke="#484848" stroke-width="1.8"/><path d="M10.0,9.9 L13.6,13.5" stroke="#484848" stroke-width="2.6" stroke-linecap="round"/></g><g transform="translate(379.35 60.2) scale(1.35)"><text x="2.3" y="7.55" font-size="9.2" font-family="'Liberation Sans',sans-serif" font-weight="bold" font-style="normal" text-anchor="middle" fill="#484848" >b</text><text x="11.9" y="15.2" font-size="12.5" font-family="'Liberation Sans',sans-serif" font-weight="bold" font-style="normal" text-anchor="middle" fill="#484848" >a</text><path d="M13.6,5.8 C12.6,4.0 11.0,3.4 8.8,3.5" fill="none" stroke="#484848" stroke-width="1.1"/><path d="M7.3,3.5 L9.8,1.5 V5.5 Z" fill="#484848"/><path d="M1.0,10.5 C1.9,12.0 3.4,12.6 5.4,12.6" fill="none" stroke="#484848" stroke-width="1.1"/><path d="M7.1,12.6 L4.6,10.6 V14.6 Z" fill="#484848"/></g><g transform="translate(423.9 60.2) scale(1.35)"><path d="M0,0.3 H14.7 V12.0 H4.7 V14.6 H0 Z" fill="#bcbcbc"/><rect x="2.3" y="2.4" width="2.4" height="2.3" fill="#484848"/><line x1="5.8" y1="2.7" x2="13.2" y2="2.7" stroke="#484848" stroke-width="0.8" stroke-linecap="butt"/><line x1="5.8" y1="4.4" x2="13.2" y2="4.4" stroke="#484848" stroke-width="0.8" stroke-linecap="butt"/><line x1="2.3" y1="6.6" x2="13.2" y2="6.6" stroke="#484848" stroke-width="0.9" stroke-linecap="butt"/><line x1="2.3" y1="8.6" x2="13.2" y2="8.6" stroke="#484848" stroke-width="0.9" stroke-linecap="butt"/><line x1="2.3" y1="10.4" x2="13.2" y2="10.4" stroke="#484848" stroke-width="0.9" stroke-linecap="butt"/><line x1="2.3" y1="12.4" x2="4.5" y2="12.4" stroke="#484848" stroke-width="0.9" stroke-linecap="butt"/><path d="M6.0,12.5 H8.7 M6.0,15.1 H8.7 M7.35,12.5 V15.1" stroke="#484848" stroke-width="0.8" fill="none"/></g><g transform="translate(461.7 60.2) scale(1.35)"><text x="6.9" y="12.0" font-size="14.4" font-family="'Liberation Serif',serif" font-weight="bold" font-style="italic" text-anchor="middle" fill="#484848" transform="translate(6.9 0) scale(0.92 1) translate(-6.9 0)" stroke="#484848" stroke-width="0.25" stroke-linejoin="round">T</text><line x1="1.25" y1="13.3" x2="8.0" y2="13.3" stroke="#484848" stroke-width="0.9" stroke-linecap="butt"/><path d="M9.4,11.0 L14.1,15.4 M14.1,11.0 L9.4,15.4" stroke="#484848" stroke-width="1.5" fill="none"/></g><g transform="translate(506.25 60.2) scale(1.35)"><rect x="1.45" y="2.75" width="13.0" height="10.2" fill="none" stroke="#484848" stroke-width="1.1"/><circle cx="4.5" cy="5.5" r="1.5" fill="#484848"/><path d="M2.2,12.4 V11.4 L4.9,8.7 L6.7,10.4 L9.9,6.8 L13.8,10.8 V12.4 Z" fill="#484848"/></g><g transform="translate(544.05 60.2) scale(1.35)"><rect x="0" y="0.96" width="16.3" height="13.8" fill="#484848"/><rect x="0.8" y="4.85" width="4.35" height="4.15" fill="#f8f8f8"/><rect x="0.8" y="9.85" width="4.35" height="3.9" fill="#f8f8f8"/><rect x="5.95" y="4.85" width="4.35" height="4.15" fill="#f8f8f8"/><rect x="5.95" y="9.85" width="4.35" height="3.9" fill="#f8f8f8"/><rect x="11.1" y="4.85" width="4.35" height="4.15" fill="#f8f8f8"/><rect x="11.1" y="9.85" width="4.35" height="3.9" fill="#f8f8f8"/></g><g transform="translate(581.85 60.2) scale(1.35)"><line x1="2.1" y1="0.8" x2="13.8" y2="0.8" stroke="#c0c0c0" stroke-width="1.1" stroke-linecap="butt"/><line x1="2.1" y1="2.8" x2="13.8" y2="2.8" stroke="#c0c0c0" stroke-width="1.1" stroke-linecap="butt"/><line x1="2.1" y1="4.8" x2="13.8" y2="4.8" stroke="#c0c0c0" stroke-width="1.1" stroke-linecap="butt"/><rect x="1.0" y="6.9" width="13.9" height="2.0" rx="0.5" fill="#484848"/><line x1="2.1" y1="11.3" x2="13.8" y2="11.3" stroke="#c0c0c0" stroke-width="1.1" stroke-linecap="butt"/><line x1="2.1" y1="13.3" x2="13.8" y2="13.3" stroke="#c0c0c0" stroke-width="1.1" stroke-linecap="butt"/><line x1="2.1" y1="15.2" x2="13.8" y2="15.2" stroke="#c0c0c0" stroke-width="1.1" stroke-linecap="butt"/></g><g transform="translate(619.65 60.2) scale(1.35)"><text x="8.6" y="14.6" font-size="18.7" font-family="'Liberation Serif',serif" font-weight="normal" font-style="normal" text-anchor="middle" fill="#484848" transform="translate(8.6 0) scale(1.04 1) translate(-8.6 0)" stroke="#484848" stroke-width="0.35" stroke-linejoin="round">Ω</text></g><g transform="translate(657.45 60.2) scale(1.35)"><path d="M0.4,4.9 L4.9,8.4 L0.4,12 Z" fill="#484848"/><rect x="6.0" y="2.85" width="10" height="2.75" fill="#484848"/><rect x="6.0" y="10.9" width="10" height="2.9" fill="#484848"/><path d="M6.0,8.3 H16" stroke="#484848" stroke-width="1.0" stroke-dasharray="2.4 1.0" fill="none"/></g><g transform="translate(695.25 60.2) scale(1.35)"><text x="7.0" y="12.0" font-size="13.6" font-family="'Liberation Sans',sans-serif" font-weight="bold" font-style="normal" text-anchor="middle" fill="#484848" >A</text><rect x="0" y="13.8" width="14.6" height="1.7" fill="#9a9a9a"/></g><g transform="translate(742.5 60.2) scale(1.35)"><rect x="-0.15" y="0.9" width="13.7" height="13.95" rx="1.9" fill="#484848"/><text x="6.85" y="12.85" font-size="13.9" font-family="'Liberation Sans',sans-serif" font-weight="bold" font-style="normal" text-anchor="middle" fill="#f8f8f8" >A</text></g></svg>
</div>
<div class="ob" style="left:1379px;top:144px;width:271px;height:86px"></div><span class="tx lk" style="left:1412.25px;top:162.1px;transform:scaleX(0.9450)">Edit</span><span class="tx lk bar" style="left:1446.85px;top:162px;transform:scaleX(1.0000)">|</span><span class="tx lk" style="left:1459.2px;top:162.1px;transform:scaleX(0.9800)">Copy from Prev Month</span><span class="tx lk" style="left:1412.2px;top:199.3px;transform:scaleX(0.9900)">View History</span>
<div class="ob" style="left:1372px;top:574px;width:290px;height:92px"></div><span class="tx lk" style="left:1412.25px;top:588.1px;transform:scaleX(0.9450)">Edit</span><span class="tx lk bar" style="left:1446.85px;top:588px;transform:scaleX(1.0000)">|</span><span class="tx lk" style="left:1459.2px;top:588.1px;transform:scaleX(0.9800)">Copy from Prev Month</span><span class="tx lk" style="left:1412.2px;top:626.3px;transform:scaleX(0.9900)">View History</span>
</body></html>
